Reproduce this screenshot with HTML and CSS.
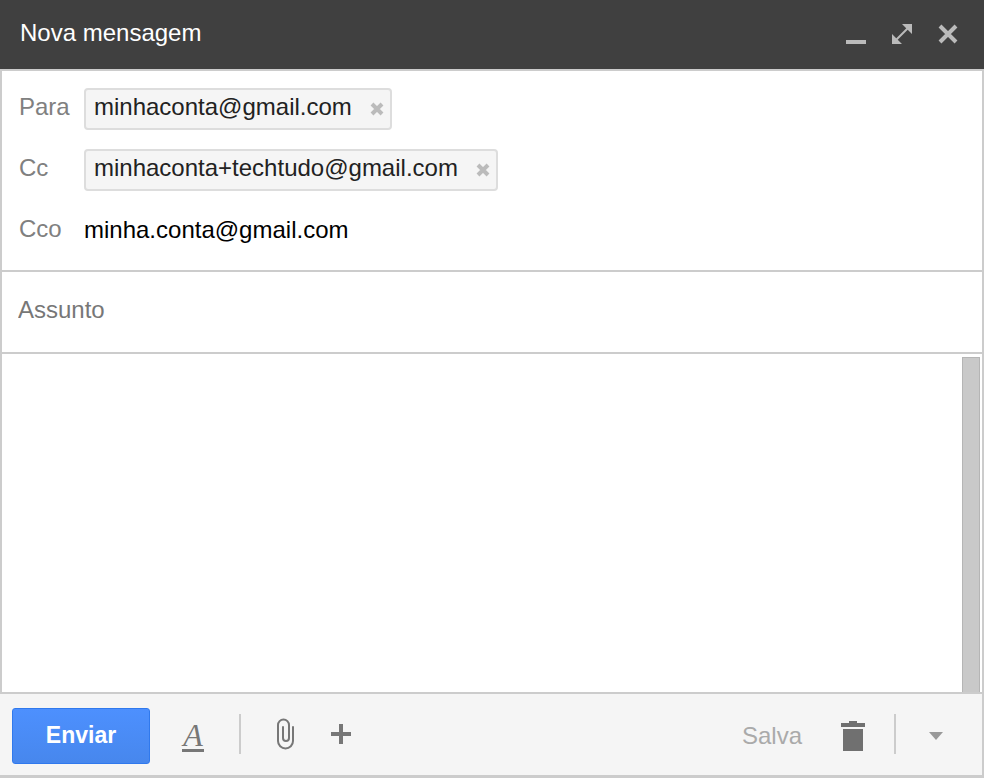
FILE: index.html
```html
<!DOCTYPE html>
<html lang="pt-BR">
<head>
    <meta charset="UTF-8">
    <meta name="viewport" content="width=device-width, initial-scale=1">
    <title>Nova mensagem</title>
    <link rel="stylesheet" href="styles.css">
</head>
<body>

<form class="compose">
    <header class="titlebar">
        <h1>Nova mensagem</h1>
        <div class="window-buttons">
            <button type="button" aria-label="Minimizar">
                <svg width="22" height="22" viewBox="0 0 22 22"><path d="M1 17h20v4H1z" fill="#bbb"/></svg>
            </button>
            <button type="button" aria-label="Tela cheia">
                <svg width="22" height="22" viewBox="0 0 22 22">
                    <path d="M11 1h10v10zM1 11v10h10z" fill="#bbb"/>
                    <path d="M5 17L17 5" stroke="#bbb" stroke-width="2"/>
                </svg>
            </button>
            <button type="button" aria-label="Fechar">
                <svg width="22" height="22" viewBox="0 0 22 22"><path d="M3 3l16 16M19 3L3 19" stroke="#bbb" stroke-width="4"/></svg>
            </button>
        </div>
    </header>

    <div class="recipients">
        <div class="row">
            <span class="label">Para</span>
            <span class="chip">minhaconta@gmail.com
                <button type="button" aria-label="Remover minhaconta@gmail.com">
                    <svg width="14" height="14" viewBox="0 0 14 14"><path d="M2 2l10 10M12 2L2 12" stroke="#bbb" stroke-width="4"/></svg>
                </button>
            </span>
        </div>
        <div class="row">
            <span class="label">Cc</span>
            <span class="chip">minhaconta+techtudo@gmail.com
                <button type="button" aria-label="Remover minhaconta+techtudo@gmail.com">
                    <svg width="14" height="14" viewBox="0 0 14 14"><path d="M2 2l10 10M12 2L2 12" stroke="#bbb" stroke-width="4"/></svg>
                </button>
            </span>
        </div>
        <div class="row">
            <label class="label" for="cco">Cco</label>
            <input type="text" id="cco" name="cco" value="minha.conta@gmail.com">
        </div>
    </div>

    <div class="subject">
        <input type="text" name="assunto" placeholder="Assunto" aria-label="Assunto">
    </div>

    <div class="message">
        <textarea name="mensagem" aria-label="Mensagem"></textarea>
        <div class="scrollbar"></div>
    </div>

    <footer class="toolbar">
        <button type="submit" class="send">Enviar</button>
        <button type="button" class="tool format" aria-label="Formatação"><span>A</span></button>
        <span class="separator"></span>
        <button type="button" class="tool attach" aria-label="Anexar arquivos">
            <svg width="20" height="34" viewBox="0 0 20 34" fill="none" stroke="#777" stroke-width="2" stroke-linecap="round">
                <path d="M18 10v14a7.5 7.5 0 0 1-15 0V8a5.5 5.5 0 0 1 11 0v13a3 3 0 0 1-6 0V10"/>
            </svg>
        </button>
        <button type="button" class="tool insert" aria-label="Inserir">
            <svg width="20" height="20" viewBox="0 0 20 20"><path d="M8 0h4v8h8v4h-8v8H8v-8H0V8h8z" fill="#777"/></svg>
        </button>

        <span class="status">Salva</span>
        <button type="button" class="tool trash" aria-label="Descartar rascunho">
            <svg width="24" height="30" viewBox="0 0 24 30" fill="#707070"><path d="M8 0h8v2h8v4H0V2h8zM2 8h20v22H2z"/></svg>
        </button>
        <span class="separator"></span>
        <button type="button" class="tool more" aria-label="Mais opções">
            <svg width="14" height="8" viewBox="0 0 14 8"><path d="M0 0h14L7 8z" fill="#999"/></svg>
        </button>
    </footer>
</form>

</body>
</html>
```

FILE: styles.css
```css
* {
    box-sizing: border-box;
}
body {
    margin: 0;
    font-family: "Liberation Sans", Arial, sans-serif;
    font-size: 24px;
    line-height: 28px;
    color: #222;
    background-color: #fff;
}
button, input, textarea {
    font: inherit;
    color: inherit;
    margin: 0;
    padding: 0;
    border: none;
    background: none;
}
input, textarea {
    flex: 1;
    min-width: 0;
    outline: none;
}
button {
    display: flex;
    align-items: center;
    justify-content: center;
    cursor: pointer;
}
svg {
    display: block;
}
.compose {
    display: flex;
    flex-direction: column;
    min-height: 100vh;
}

/* title bar */
.titlebar {
    display: flex;
    align-items: center;
    justify-content: space-between;
    padding: 19px 25px 22px 20px;
    background-color: #404040;
    color: #fff;
}
.titlebar h1 {
    margin: 0;
    font-size: 24px;
    font-weight: normal;
}
.window-buttons {
    display: flex;
    gap: 24px;
    padding-top: 2px;
}

/* address fields */
.recipients, .subject, .message {
    border: 2px solid #ccc;
    border-bottom: none;
}
.recipients {
    display: flex;
    flex-direction: column;
    gap: 19px;
    padding: 17px 17px 18px;
}
.row {
    display: flex;
    align-items: center;
    height: 42px;
}
.label {
    width: 65px;
    padding-bottom: 4px;
    color: #808080;
}
.row input {
    padding-bottom: 2px;
    color: #000;
}
.chip {
    display: flex;
    align-items: center;
    gap: 18px;
    height: 42px;
    padding: 0 6px 4px 8px;
    border: 2px solid #ddd;
    border-radius: 4px;
    background-color: #f5f5f5;
}
.chip button {
    padding-top: 4px;
}
.subject {
    display: flex;
    padding: 24px 16px 28px;
}
.subject input::placeholder {
    color: #777;
    opacity: 1;
}

/* message body */
.message {
    display: flex;
    flex: 1;
}
.message textarea {
    padding: 16px;
    resize: none;
}
.scrollbar {
    width: 18px;
    margin: 3px 2px 0 0;
    border: 1px solid #b5b5b5;
    border-bottom: none;
    background-color: #c9c9c9;
}

/* bottom toolbar */
.toolbar {
    display: flex;
    align-items: center;
    padding: 14px 39px 11px 12px;
    border-top: 2px solid #ccc;
    border-right: 2px solid #ccc;
    border-bottom: 3px solid #ccc;
    background-color: #f5f5f5;
}
.send {
    width: 138px;
    height: 56px;
    padding-bottom: 2px;
    border: 1px solid #3079ed;
    border-radius: 3px;
    background: linear-gradient(#4d90fe, #4787ed);
    color: #fff;
    font-size: 23px;
    font-weight: bold;
}
.separator {
    width: 2px;
    height: 40px;
    margin-bottom: 4px;
    background-color: #ccc;
}
.format {
    margin: 0 35px 0 32px;
    color: #777;
    font-family: "Liberation Serif", serif;
    font-size: 32px;
    font-style: italic;
}
.format span {
    width: 22px;
    border-bottom: 3px solid #777;
}
.attach, .insert {
    padding-bottom: 4px;
}
.attach {
    margin: 0 36px 0 34px;
}
.status {
    margin-left: auto;
    color: #aaa;
}
.trash {
    margin: 0 29px 0 39px;
}
.more {
    margin-left: 33px;
}
```
